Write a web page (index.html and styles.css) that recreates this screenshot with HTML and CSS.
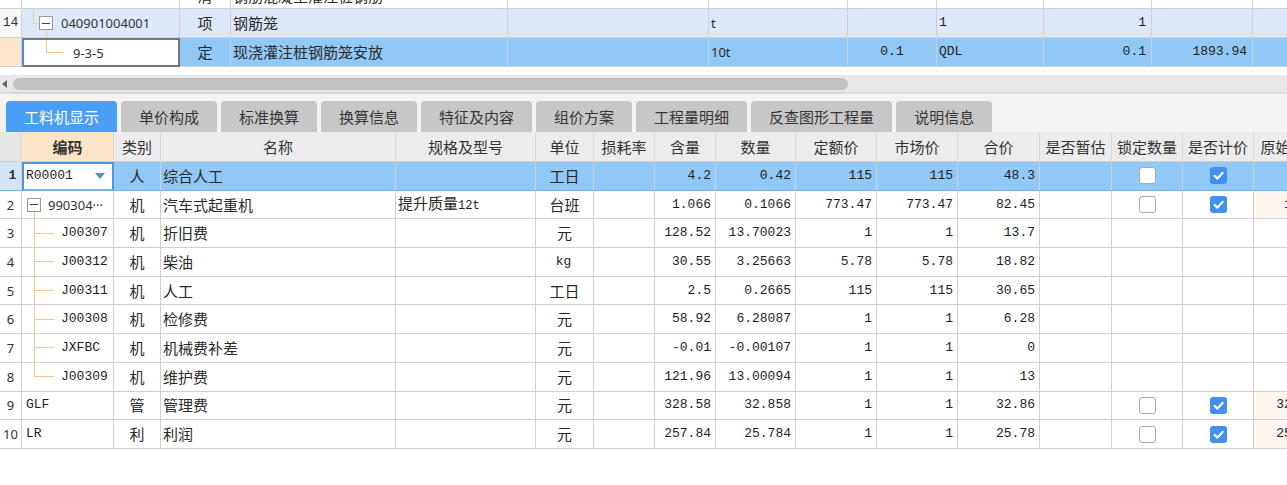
FILE: index.html
```html
<!DOCTYPE html>
<html lang="zh">
<head>
<meta charset="utf-8">
<title>工料机显示</title>
<link rel="stylesheet" href="styles.css">
</head>
<body>
<div class="upper">
  <div class="urow partial">
    <div class="c num"></div>
    <div class="c code"><span class="vl"></span></div>
    <div class="c ctr">清</div>
    <div class="c">钢筋混凝土灌注桩钢筋</div>
    <div class="c"></div>
    <div class="c"></div>
    <div class="c"></div>
    <div class="c"></div>
    <div class="c"></div>
    <div class="c"></div>
    <div class="c"></div>
  </div>
  <div class="urow hl">
    <div class="c num m">14</div>
    <div class="c code"><span class="br top"></span><span class="node"><span class="box"></span></span><span class="s code-t1">040901004001</span></div>
    <div class="c ctr">项</div>
    <div class="c">钢筋笼</div>
    <div class="c"></div>
    <div class="c s">t</div>
    <div class="c"></div>
    <div class="c m">1</div>
    <div class="c m rt">1</div>
    <div class="c"></div>
    <div class="c"></div>
  </div>
  <div class="urow sel">
    <div class="c num"></div>
    <div class="c code edit-dark"><span class="br last wide"></span><span class="s code-t2">9-3-5</span></div>
    <div class="c ctr">定</div>
    <div class="c">现浇灌注桩钢筋笼安放</div>
    <div class="c"></div>
    <div class="c s">10t</div>
    <div class="c m ctr">0.1</div>
    <div class="c m">QDL</div>
    <div class="c m rt">0.1</div>
    <div class="c m rt">1893.94</div>
    <div class="c"></div>
  </div>
</div>

<div class="hscroll">
  <span class="arrow"></span>
  <span class="thumb"></span>
</div>

<div class="tabstrip">
  <div class="tab active">工料机显示</div>
  <div class="tab">单价构成</div>
  <div class="tab">标准换算</div>
  <div class="tab">换算信息</div>
  <div class="tab">特征及内容</div>
  <div class="tab">组价方案</div>
  <div class="tab">工程量明细</div>
  <div class="tab">反查图形工程量</div>
  <div class="tab">说明信息</div>
</div>

<div class="lower">
  <div class="lrow head">
    <div class="c num"></div>
    <div class="c ctr key">编码</div>
    <div class="c ctr">类别</div>
    <div class="c ctr">名称</div>
    <div class="c ctr">规格及型号</div>
    <div class="c ctr">单位</div>
    <div class="c ctr">损耗率</div>
    <div class="c ctr">含量</div>
    <div class="c ctr">数量</div>
    <div class="c ctr">定额价</div>
    <div class="c ctr">市场价</div>
    <div class="c ctr">合价</div>
    <div class="c ctr">是否暂估</div>
    <div class="c ctr">锁定数量</div>
    <div class="c ctr">是否计价</div>
    <div class="c ctr">原始含量</div>
  </div>

  <div class="lrow sel">
    <div class="c num m bold">1</div>
    <div class="c code edit-blue"><span class="m">R00001</span><span class="dd"></span></div>
    <div class="c ctr">人</div>
    <div class="c">综合人工</div>
    <div class="c"></div>
    <div class="c ctr">工日</div>
    <div class="c"></div>
    <div class="c m rt">4.2</div>
    <div class="c m rt">0.42</div>
    <div class="c m rt">115</div>
    <div class="c m rt">115</div>
    <div class="c m rt">48.3</div>
    <div class="c"></div>
    <div class="c ctr"><span class="cb"></span></div>
    <div class="c ctr"><span class="cb on"><svg viewBox="0 0 17 17" width="17" height="17"><path d="M4.6 8.9 L7.4 11.6 L12.6 5.9" fill="none" stroke="#fff" stroke-width="2.2" stroke-linecap="round" stroke-linejoin="round"/></svg></span></div>
    <div class="c m rt">4.2</div>
  </div>

  <div class="lrow">
    <div class="c num">2</div>
    <div class="c code"><span class="node n2"><span class="box"></span></span><span class="s code-t3">990304···</span></div>
    <div class="c ctr">机</div>
    <div class="c">汽车式起重机</div>
    <div class="c spec"><span>提升质量<span class="m small">12t</span></span></div>
    <div class="c ctr">台班</div>
    <div class="c"></div>
    <div class="c m rt">1.066</div>
    <div class="c m rt">0.1066</div>
    <div class="c m rt">773.47</div>
    <div class="c m rt">773.47</div>
    <div class="c m rt">82.45</div>
    <div class="c"></div>
    <div class="c ctr"><span class="cb"></span></div>
    <div class="c ctr"><span class="cb on"><svg viewBox="0 0 17 17" width="17" height="17"><path d="M4.6 8.9 L7.4 11.6 L12.6 5.9" fill="none" stroke="#fff" stroke-width="2.2" stroke-linecap="round" stroke-linejoin="round"/></svg></span></div>
    <div class="c m rt orig">1.066</div>
  </div>

  <div class="lrow">
    <div class="c num">3</div>
    <div class="c code"><span class="br full"></span><span class="m code-t4">J00307</span></div>
    <div class="c ctr">机</div>
    <div class="c">折旧费</div>
    <div class="c"></div>
    <div class="c ctr">元</div>
    <div class="c"></div>
    <div class="c m rt">128.52</div>
    <div class="c m rt">13.70023</div>
    <div class="c m rt">1</div>
    <div class="c m rt">1</div>
    <div class="c m rt">13.7</div>
    <div class="c"></div>
    <div class="c"></div>
    <div class="c"></div>
    <div class="c"></div>
  </div>

  <div class="lrow">
    <div class="c num">4</div>
    <div class="c code"><span class="br full"></span><span class="m code-t4">J00312</span></div>
    <div class="c ctr">机</div>
    <div class="c">柴油</div>
    <div class="c"></div>
    <div class="c ctr m">kg</div>
    <div class="c"></div>
    <div class="c m rt">30.55</div>
    <div class="c m rt">3.25663</div>
    <div class="c m rt">5.78</div>
    <div class="c m rt">5.78</div>
    <div class="c m rt">18.82</div>
    <div class="c"></div>
    <div class="c"></div>
    <div class="c"></div>
    <div class="c"></div>
  </div>

  <div class="lrow">
    <div class="c num">5</div>
    <div class="c code"><span class="br full"></span><span class="m code-t4">J00311</span></div>
    <div class="c ctr">机</div>
    <div class="c">人工</div>
    <div class="c"></div>
    <div class="c ctr">工日</div>
    <div class="c"></div>
    <div class="c m rt">2.5</div>
    <div class="c m rt">0.2665</div>
    <div class="c m rt">115</div>
    <div class="c m rt">115</div>
    <div class="c m rt">30.65</div>
    <div class="c"></div>
    <div class="c"></div>
    <div class="c"></div>
    <div class="c"></div>
  </div>

  <div class="lrow">
    <div class="c num">6</div>
    <div class="c code"><span class="br full"></span><span class="m code-t4">J00308</span></div>
    <div class="c ctr">机</div>
    <div class="c">检修费</div>
    <div class="c"></div>
    <div class="c ctr">元</div>
    <div class="c"></div>
    <div class="c m rt">58.92</div>
    <div class="c m rt">6.28087</div>
    <div class="c m rt">1</div>
    <div class="c m rt">1</div>
    <div class="c m rt">6.28</div>
    <div class="c"></div>
    <div class="c"></div>
    <div class="c"></div>
    <div class="c"></div>
  </div>

  <div class="lrow">
    <div class="c num">7</div>
    <div class="c code"><span class="br full"></span><span class="m code-t4">JXFBC</span></div>
    <div class="c ctr">机</div>
    <div class="c">机械费补差</div>
    <div class="c"></div>
    <div class="c ctr">元</div>
    <div class="c"></div>
    <div class="c m rt">-0.01</div>
    <div class="c m rt">-0.00107</div>
    <div class="c m rt">1</div>
    <div class="c m rt">1</div>
    <div class="c m rt">0</div>
    <div class="c"></div>
    <div class="c"></div>
    <div class="c"></div>
    <div class="c"></div>
  </div>

  <div class="lrow">
    <div class="c num">8</div>
    <div class="c code"><span class="br last"></span><span class="m code-t4">J00309</span></div>
    <div class="c ctr">机</div>
    <div class="c">维护费</div>
    <div class="c"></div>
    <div class="c ctr">元</div>
    <div class="c"></div>
    <div class="c m rt">121.96</div>
    <div class="c m rt">13.00094</div>
    <div class="c m rt">1</div>
    <div class="c m rt">1</div>
    <div class="c m rt">13</div>
    <div class="c"></div>
    <div class="c"></div>
    <div class="c"></div>
    <div class="c"></div>
  </div>

  <div class="lrow">
    <div class="c num">9</div>
    <div class="c m">GLF</div>
    <div class="c ctr">管</div>
    <div class="c">管理费</div>
    <div class="c"></div>
    <div class="c ctr">元</div>
    <div class="c"></div>
    <div class="c m rt">328.58</div>
    <div class="c m rt">32.858</div>
    <div class="c m rt">1</div>
    <div class="c m rt">1</div>
    <div class="c m rt">32.86</div>
    <div class="c"></div>
    <div class="c ctr"><span class="cb"></span></div>
    <div class="c ctr"><span class="cb on"><svg viewBox="0 0 17 17" width="17" height="17"><path d="M4.6 8.9 L7.4 11.6 L12.6 5.9" fill="none" stroke="#fff" stroke-width="2.2" stroke-linecap="round" stroke-linejoin="round"/></svg></span></div>
    <div class="c m rt orig">328.58</div>
  </div>

  <div class="lrow">
    <div class="c num">10</div>
    <div class="c m">LR</div>
    <div class="c ctr">利</div>
    <div class="c">利润</div>
    <div class="c"></div>
    <div class="c ctr">元</div>
    <div class="c"></div>
    <div class="c m rt">257.84</div>
    <div class="c m rt">25.784</div>
    <div class="c m rt">1</div>
    <div class="c m rt">1</div>
    <div class="c m rt">25.78</div>
    <div class="c"></div>
    <div class="c ctr"><span class="cb"></span></div>
    <div class="c ctr"><span class="cb on"><svg viewBox="0 0 17 17" width="17" height="17"><path d="M4.6 8.9 L7.4 11.6 L12.6 5.9" fill="none" stroke="#fff" stroke-width="2.2" stroke-linecap="round" stroke-linejoin="round"/></svg></span></div>
    <div class="c m rt orig">257.84</div>
  </div>
</div>
</body>
</html>
```

FILE: styles.css
```css
* { box-sizing: border-box; }

html, body {
  margin: 0;
  padding: 0;
  overflow: hidden;
  background: #ffffff;
}

body {
  width: 1287px;
  height: 485px;
  font-family: "Noto Sans CJK SC", "Noto Sans", sans-serif;
  font-size: 15px;
  color: #2a2a2a;
}

/* generic cell */
.c {
  display: flex;
  align-items: center;
  padding: 0 2px;
  border-right: 1px solid #d0d0d0;
  border-bottom: 1px solid #d0d0d0;
  white-space: nowrap;
  overflow: hidden;
  line-height: 18px;
  min-width: 0;
}
.ctr { justify-content: center; }
.rt { justify-content: flex-end; padding-right: 4px; }

.m {
  font-family: "Liberation Mono", "Noto Sans CJK SC", monospace;
  font-size: 13px;
  color: #1e1e1e;
}
.s {
  font-family: "Noto Sans", "Noto Sans CJK SC", sans-serif;
  font-size: 13px;
}
.small { font-size: 12px; }
.bold { font-weight: bold; }

.num {
  justify-content: center;
  padding: 0;
  font-family: "Noto Sans", sans-serif;
  font-size: 13px;
  color: #333;
}
.num.m { font-family: "Liberation Mono", monospace; }

/* ---------- upper grid ---------- */
.upper {
  height: 67px;
  overflow: hidden;
}
.urow {
  display: grid;
  grid-template-columns: 22px 158px 51px 277px 201px 139px 89px 107px 108px 101px 100px;
  width: 1353px;
  height: 29px;
}
.urow.partial { margin-top: -20px; }
.urow.partial .c { align-items: flex-end; padding-bottom: 3px; }
.urow.partial .code { padding-bottom: 0; }
.urow.hl .c { background: #dde9fb; }
.urow.hl .num { background: #f8f8f8; }
.urow.sel .c { background: #91c8f5; }
.urow.sel .num { background: #fde6c9; }
.urow .rt { padding-right: 5px; }

.code { padding: 0; align-items: stretch; }
.code > .s, .code > .m { align-self: center; }

.vl {
  width: 1px;
  margin-left: 11px;
  background: #f8c98c;
}

/* tree branches */
.br {
  width: 6px;
  margin-left: 11px;
  background:
    linear-gradient(#f8c98c, #f8c98c) left top / 1px 100% no-repeat,
    linear-gradient(#f8c98c, #f8c98c) left center / 100% 1px no-repeat;
}
.br.top,
.br.last {
  background:
    linear-gradient(#f8c98c, #f8c98c) left top / 1px 50% no-repeat,
    linear-gradient(#f8c98c, #f8c98c) left center / 100% 1px no-repeat;
}
.br.full { width: 20px; margin-left: 12px; }
.lrow .br.last { width: 20px; margin-left: 12px; }
.br.wide { width: 17px; margin-left: 22px; }

.node {
  width: 14px;
  display: flex;
  align-items: center;
  background: linear-gradient(#f8c98c, #f8c98c) 7px 100% / 1px 50% no-repeat;
}
.node.n2 { margin-left: 5px; }
.box {
  width: 14px;
  height: 14px;
  border: 1px solid #9a9a9a;
  background: #fff linear-gradient(#444, #444) center / 8px 1px no-repeat;
}

.code-t1 { margin-left: 8px; color: #333; }
.code-t2 { margin-left: 10px; color: #333; }
.code-t3 { margin-left: 7px; color: #333; }
.code-t4 { margin-left: 7px; }

.edit-dark {
  background: #fff !important;
  border: 2px solid #767676;
  border-left: 2px solid #4a90e2;
}

/* ---------- scrollbar ---------- */
.hscroll {
  margin-top: 8px;
  height: 18px;
  background: #e8e8e8;
  border-bottom: 1px solid #d6d6d6;
  display: flex;
  align-items: center;
}
.arrow {
  width: 0;
  height: 0;
  margin-left: 2px;
  border-top: 4px solid transparent;
  border-bottom: 4px solid transparent;
  border-right: 5px solid #666;
}
.thumb {
  margin-left: 6px;
  width: 835px;
  height: 12px;
  border-radius: 6px;
  background: #c1c1c1;
}

/* ---------- tabs ---------- */
.tabstrip {
  height: 39px;
  background: #f3f3f3;
  border-top: 1px solid #e0e0e0;
  padding: 6px 0 0 6px;
  display: flex;
  gap: 4px;
  align-items: flex-end;
}
.tab {
  height: 31px;
  padding: 0 18px;
  background: #c7c7c7;
  border-radius: 4px 4px 0 0;
  color: #363636;
  font-size: 15px;
  line-height: 31px;
  white-space: nowrap;
}
.tab.active {
  background: #4b9ef5;
  color: #ffffff;
}

/* ---------- lower grid ---------- */
.lrow {
  display: grid;
  grid-template-columns: 22px 92px 47px 235px 140px 58px 61px 61px 80px 81px 81px 82px 72px 71px 71px 74px;
  width: 1328px;
  height: 28.7px;
}
.lrow.head {
  height: 30px;
  background: #ececec;
  color: #333;
}
.lrow.head .c { border-right-color: #d8d8d8; border-bottom-color: #cfcfcf; }
.lrow.head .key {
  background: #fde5c8;
  font-weight: bold;
}
.lrow.head .num { background: #e6e6e6; }

.lrow.sel .c {
  background: #91c8f5;
  border-bottom-color: #78b0e6;
}
.lrow.sel .num { background: #d4e5f7; }

.lrow > .m:not(.rt) { padding-left: 4px; }
.lrow > .ctr.m { padding-left: 0; }
.spec { padding-left: 2px; }
.lrow .code > .m { padding-left: 0; }

.edit-blue {
  background: #fff !important;
  border: 2px solid #4a97ea;
  padding-left: 2px;
}
.lrow .edit-blue { align-items: center; }
.dd {
  margin-left: auto;
  margin-right: 7px;
  width: 0;
  height: 0;
  border-left: 5px solid transparent;
  border-right: 5px solid transparent;
  border-top: 6px solid #5b8ec4;
}

.orig { background: #fdf7f0; }

.cb {
  display: block;
  width: 17px;
  height: 17px;
  border: 1px solid #a9a9a9;
  border-radius: 3px;
  background: #ffffff;
}
.cb.on {
  border: none;
  background: #3f90f0;
}
.cb svg { display: block; }
```
